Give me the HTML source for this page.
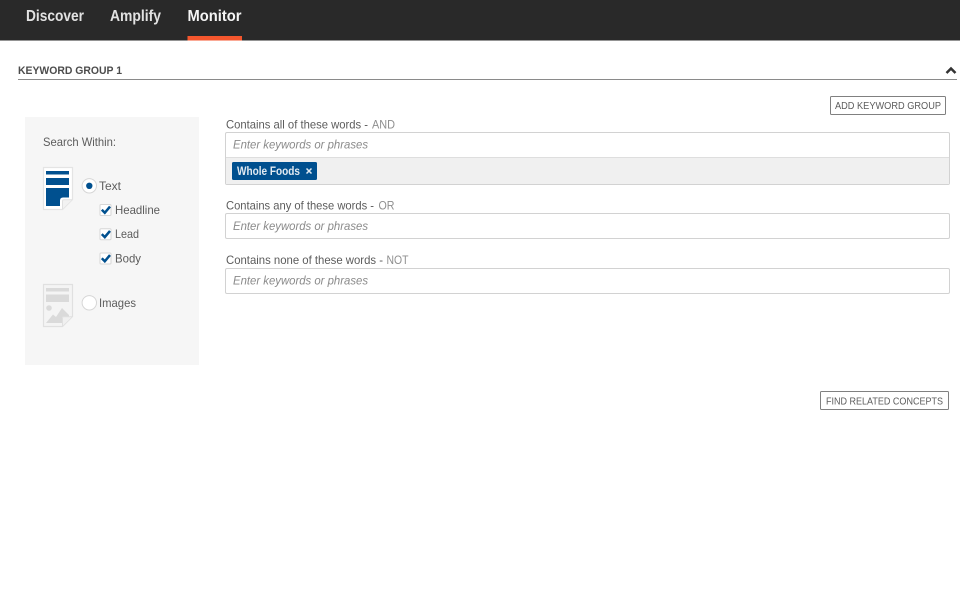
<!DOCTYPE html>
<html><head><meta charset="utf-8"><style>
html,body{margin:0;padding:0;background:#fff;overflow:hidden}
svg{display:block}
text{font-family:"Liberation Sans",sans-serif}
.n{font-size:15.5px;font-weight:700;fill:#e2e2e2}
.l{font-size:12px;fill:#5c5c5c}
.lg{fill:#8e8e8e}
.p{font-size:12px;font-style:italic;fill:#8a8a8a}
.b{font-size:10px;fill:#5c5c5c}
</style></head><body>
<svg width="960" height="613" viewBox="0 0 960 613" xmlns="http://www.w3.org/2000/svg">
<rect width="960" height="613" fill="#fff"/>
<rect width="960" height="40.500" fill="#292929"/>
<text class="n" x="26" y="21" textLength="58" lengthAdjust="spacingAndGlyphs">Discover</text>
<text class="n" x="110" y="21" textLength="51" lengthAdjust="spacingAndGlyphs">Amplify</text>
<text class="n" x="187.500" y="21" textLength="54" lengthAdjust="spacingAndGlyphs" style="fill:#f5f5f5">Monitor</text>
<rect x="187.500" y="36" width="54.500" height="4.500" fill="#f4562d"/>

<text x="18" y="74" font-size="11" font-weight="700" fill="#4c4c4c" textLength="104" lengthAdjust="spacingAndGlyphs">KEYWORD GROUP 1</text>
<rect x="18" y="79" width="939" height="1" fill="#8a8a8a"/>
<path d="M946.500 73L951 68.500L955.500 73" fill="none" stroke="#333" stroke-width="2.500"/>

<rect x="830.500" y="96.500" width="115" height="18" rx="1" fill="#fff" stroke="#808080"/>
<text class="b" x="835" y="109" textLength="106" lengthAdjust="spacingAndGlyphs">ADD KEYWORD GROUP</text>

<rect x="25" y="117" width="174" height="248" fill="#f6f6f6"/>
<text class="l" x="43" y="146" textLength="73" lengthAdjust="spacingAndGlyphs">Search Within:</text>

<!-- text document icon -->
<path d="M43.500 167.500H72.500V199.500L62.500 209.500H43.500Z" fill="#fff" stroke="#e4e4e4" stroke-width="1.200"/>
<rect x="46" y="171" width="23" height="3.500" fill="#00508f"/>
<rect x="46" y="178" width="23" height="7" fill="#00508f"/>
<path d="M46 188H69V197.500H63Q60 197.500 60 200.500V206H46Z" fill="#00508f"/>
<path d="M62.500 209V201Q62.500 199.800 64 199.800H72" fill="#f2f2f2" stroke="#e0e0e0"/>

<circle cx="89.300" cy="185.800" r="7.200" fill="#fff" stroke="#d6d6d6"/>
<circle cx="89.300" cy="185.800" r="3.200" fill="#00508f"/>
<text class="l" x="99" y="190" textLength="22" lengthAdjust="spacingAndGlyphs">Text</text>

<rect x="100" y="204.500" width="11" height="11" rx="1" fill="#fff" stroke="#d6d6d6"/><path d="M101.800 209.800L104.800 212.800L110 206.600" fill="none" stroke="#00508f" stroke-width="2.500"/>
<text class="l" x="115" y="214" textLength="45" lengthAdjust="spacingAndGlyphs">Headline</text>
<g transform="translate(0 24.300)"><rect x="100" y="204.500" width="11" height="11" rx="1" fill="#fff" stroke="#d6d6d6"/><path d="M101.800 209.800L104.800 212.800L110 206.600" fill="none" stroke="#00508f" stroke-width="2.500"/></g>
<text class="l" x="115" y="238" textLength="24" lengthAdjust="spacingAndGlyphs">Lead</text>
<g transform="translate(0 48.500)"><rect x="100" y="204.500" width="11" height="11" rx="1" fill="#fff" stroke="#d6d6d6"/><path d="M101.800 209.800L104.800 212.800L110 206.600" fill="none" stroke="#00508f" stroke-width="2.500"/></g>
<text class="l" x="115" y="262.500" textLength="26" lengthAdjust="spacingAndGlyphs">Body</text>

<!-- image document icon -->
<path d="M43.500 284.500H72.500V316.500L62.500 326.500H43.500Z" fill="#f4f4f4" stroke="#e0e0e0" stroke-width="1.200"/>
<rect x="46" y="288" width="23" height="3.500" fill="#dadada"/>
<rect x="46" y="294.500" width="23" height="7.500" fill="#dadada"/>
<circle cx="49" cy="308" r="2.800" fill="#dadada"/>
<path d="M46 323L53 314.500L56 317L62 308L69 315V317H62V323Z" fill="#dadada"/>
<path d="M62.500 326V318Q62.500 316.800 64 316.800H72" fill="#f0f0f0" stroke="#e0e0e0"/>

<circle cx="89.300" cy="302.800" r="7.200" fill="#fff" stroke="#d6d6d6"/>
<text class="l" x="99" y="307" textLength="37" lengthAdjust="spacingAndGlyphs">Images</text>

<!-- AND -->
<text class="l" x="226" y="128.500" textLength="142" lengthAdjust="spacingAndGlyphs">Contains all of these words -</text>
<text class="l lg" x="372" y="128.500" textLength="23" lengthAdjust="spacingAndGlyphs">AND</text>
<rect x="225.500" y="132.500" width="724" height="52" rx="1.500" fill="#fff" stroke="#d2d2d2"/>
<rect x="226" y="158" width="723" height="26" fill="#f0f0f0"/>
<rect x="226" y="157" width="723" height="1" fill="#dedede"/>
<text class="p" x="233" y="148.500" textLength="135" lengthAdjust="spacingAndGlyphs">Enter keywords or phrases</text>
<rect x="232" y="162" width="85" height="18" rx="1.500" fill="#00508f"/>
<text x="237" y="175" font-size="11.500" font-weight="700" fill="#e2eaf1" textLength="63" lengthAdjust="spacingAndGlyphs">Whole Foods</text>
<path d="M306.500 168.500L311.500 173.500M311.500 168.500L306.500 173.500" stroke="#dfe8f0" stroke-width="1.500"/>

<!-- OR -->
<text class="l" x="226" y="209.500" textLength="148" lengthAdjust="spacingAndGlyphs">Contains any of these words -</text>
<text class="l lg" x="378.500" y="209.500" textLength="16" lengthAdjust="spacingAndGlyphs">OR</text>
<rect x="225.500" y="213.500" width="724" height="25" rx="1.500" fill="#fff" stroke="#d2d2d2"/>
<text class="p" x="233" y="230" textLength="135" lengthAdjust="spacingAndGlyphs">Enter keywords or phrases</text>

<!-- NOT -->
<text class="l" x="226" y="264" textLength="157" lengthAdjust="spacingAndGlyphs">Contains none of these words -</text>
<text class="l lg" x="386.500" y="264" textLength="22" lengthAdjust="spacingAndGlyphs">NOT</text>
<rect x="225.500" y="268.500" width="724" height="25" rx="1.500" fill="#fff" stroke="#d2d2d2"/>
<text class="p" x="233" y="284.500" textLength="135" lengthAdjust="spacingAndGlyphs">Enter keywords or phrases</text>

<rect x="820.500" y="391.500" width="128" height="18" rx="1" fill="#fff" stroke="#808080"/>
<text class="b" x="826" y="404.500" textLength="117" lengthAdjust="spacingAndGlyphs">FIND RELATED CONCEPTS</text>
</svg>
</body></html>
